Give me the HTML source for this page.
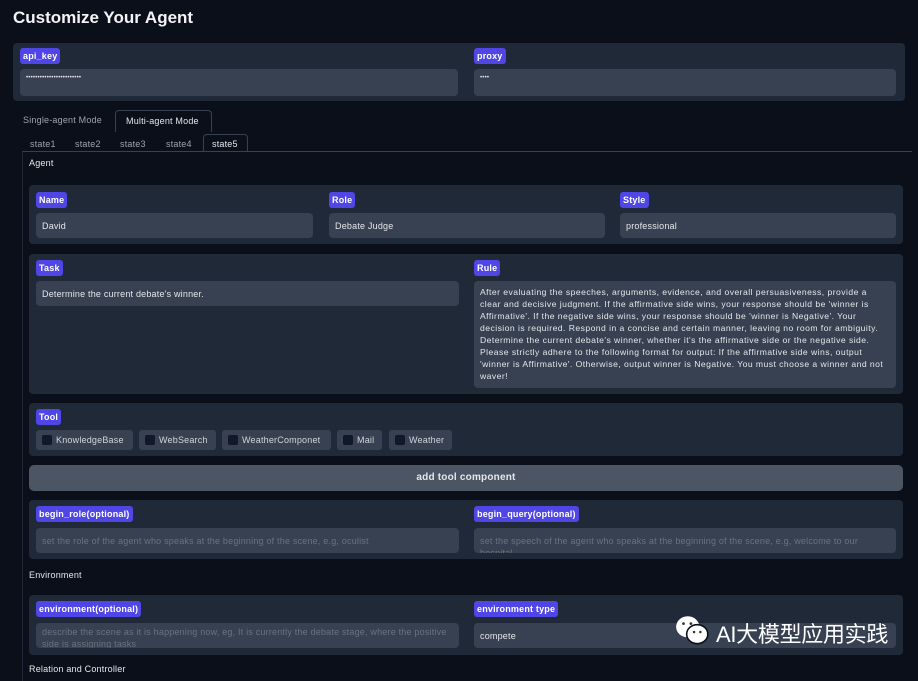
<!DOCTYPE html>
<html><head><meta charset="utf-8"><style>
*{box-sizing:border-box;margin:0;padding:0}
body{width:918px;height:672px;overflow:hidden;background:#0b0f19;font-family:"Liberation Sans",sans-serif;color:#d1d5db;position:relative;font-size:9px;letter-spacing:0.2px}
.a{position:absolute}
.p{position:absolute;background:#1f2937;border-radius:4px}
.b{position:absolute;background:#4f46e5;color:#fff;font-size:9px;font-weight:bold;padding:0 3px;height:16px;line-height:16px;border-radius:3px}
.i{position:absolute;background:#374151;border-radius:4px;font-size:9px;color:#e5e7eb;padding:7px 6px;line-height:12px}
.ph{color:#6b7280}
.cb{position:absolute;top:430px;height:20px;background:#374151;border-radius:3px;font-size:9px;line-height:20px;padding-left:20px;color:#d1d5db}
.cb:before{content:"";position:absolute;left:6px;top:5px;width:10px;height:10px;border-radius:2px;background:#111827}
</style></head><body>
<div class="a" style="left:13px;top:8px;font-size:17px;font-weight:bold;color:#f3f4f6;letter-spacing:0">Customize Your Agent</div>
<div class="p" style="left:13px;top:43px;width:892px;height:58px"></div>
<div class="b" style="left:20px;top:48px">api_key</div>
<div class="i" style="left:20px;top:69px;width:438px;height:27px;padding-top:3px;font-size:6px">••••••••••••••••••••••••</div>
<div class="b" style="left:474px;top:48px">proxy</div>
<div class="i" style="left:474px;top:69px;width:422px;height:27px;padding-top:3px;font-size:6px">••••</div>
<div class="a" style="left:23px;top:115px;color:#9ca3af">Single-agent Mode</div>
<div class="a" style="left:115px;top:110px;width:97px;height:22px;border:1px solid #374151;border-bottom:none;border-radius:4px 4px 0 0;padding:5px 10px;color:#e5e7eb">Multi-agent Mode</div>
<div class="a" style="left:30px;top:139px;color:#9ca3af">state1</div>
<div class="a" style="left:75px;top:139px;color:#9ca3af">state2</div>
<div class="a" style="left:120px;top:139px;color:#9ca3af">state3</div>
<div class="a" style="left:166px;top:139px;color:#9ca3af">state4</div>
<div class="a" style="left:203px;top:134px;width:45px;height:18px;border:1px solid #374151;border-bottom:none;border-radius:4px 4px 0 0;padding:4px 8px;color:#e5e7eb;background:#0b0f19">state5</div>
<div class="a" style="left:22px;top:151px;width:890px;height:530px;border-left:1px solid #1f2937;border-top:1px solid #374151"></div>
<div class="a" style="left:29px;top:158px;color:#e5e7eb">Agent</div>
<div class="p" style="left:29px;top:185px;width:874px;height:59px"></div>
<div class="b" style="left:36px;top:192px">Name</div>
<div class="i" style="left:36px;top:213px;width:277px;height:25px">David</div>
<div class="b" style="left:329px;top:192px">Role</div>
<div class="i" style="left:329px;top:213px;width:276px;height:25px">Debate Judge</div>
<div class="b" style="left:620px;top:192px">Style</div>
<div class="i" style="left:620px;top:213px;width:276px;height:25px">professional</div>
<div class="p" style="left:29px;top:254px;width:874px;height:140px"></div>
<div class="b" style="left:36px;top:260px">Task</div>
<div class="i" style="left:36px;top:281px;width:423px;height:25px">Determine the current debate's winner.</div>
<div class="b" style="left:474px;top:260px">Rule</div>
<div class="i" style="left:474px;top:281px;width:422px;height:107px;font-size:8.6px;letter-spacing:0.45px;padding:5px 6px">After evaluating the speeches, arguments, evidence, and overall persuasiveness, provide a clear and decisive judgment. If the affirmative side wins, your response should be 'winner is Affirmative'. If the negative side wins, your response should be 'winner is Negative'. Your decision is required. Respond in a concise and certain manner, leaving no room for ambiguity. Determine the current debate's winner, whether it's the affirmative side or the negative side. Please strictly adhere to the following format for output: If the affirmative side wins, output 'winner is Affirmative'. Otherwise, output winner is Negative. You must choose a winner and not waver!</div>
<div class="p" style="left:29px;top:403px;width:874px;height:53px"></div>
<div class="b" style="left:36px;top:409px">Tool</div>
<div class="cb" style="left:36px;width:97px">KnowledgeBase</div>
<div class="cb" style="left:139px;width:77px">WebSearch</div>
<div class="cb" style="left:222px;width:109px">WeatherComponet</div>
<div class="cb" style="left:337px;width:45px">Mail</div>
<div class="cb" style="left:389px;width:63px">Weather</div>
<div class="a" style="left:29px;top:465px;width:874px;height:26px;background:#4b5563;border-radius:5px;text-align:center;line-height:26px;font-size:10px;font-weight:bold;color:#e5e7eb">add tool component</div>
<div class="p" style="left:29px;top:500px;width:874px;height:59px"></div>
<div class="b" style="left:36px;top:506px">begin_role(optional)</div>
<div class="i ph" style="left:36px;top:528px;width:423px;height:25px">set the role of the agent who speaks at the beginning of the scene, e.g, oculist</div>
<div class="b" style="left:474px;top:506px">begin_query(optional)</div>
<div class="i ph" style="left:474px;top:528px;width:422px;height:25px;overflow:hidden">set the speech of the agent who speaks at the beginning of the scene, e.g, welcome to our hospital</div>
<div class="a" style="left:29px;top:570px;color:#e5e7eb">Environment</div>
<div class="p" style="left:29px;top:595px;width:874px;height:60px"></div>
<div class="b" style="left:36px;top:601px">environment(optional)</div>
<div class="i ph" style="left:36px;top:623px;width:423px;height:25px;overflow:hidden;padding-top:3px">describe the scene as it is happening now, eg, It is currently the debate stage, where the positive side is assigning tasks</div>
<div class="b" style="left:474px;top:601px">environment type</div>
<div class="i" style="left:474px;top:623px;width:422px;height:25px">compete</div>
<div class="a" style="left:29px;top:664px;color:#e5e7eb">Relation and Controller</div>
<svg class="a" style="left:674px;top:614px" width="38" height="34" viewBox="0 0 36 32"><ellipse cx="13" cy="12" rx="11" ry="10" fill="#fff"/><ellipse cx="22" cy="19" rx="10" ry="9" fill="#fff" stroke="#0b0f19" stroke-width="1.5"/><circle cx="9" cy="9" r="1.3" fill="#333"/><circle cx="16" cy="9" r="1.3" fill="#333"/><circle cx="19" cy="17" r="1.2" fill="#333"/><circle cx="25" cy="17" r="1.2" fill="#333"/></svg>
<div class="a" style="left:716px;top:617px;font-size:22px;color:#fff;letter-spacing:-0.3px;font-family:'Liberation Sans','Noto Sans CJK SC',sans-serif">AI大模型应用实践</div>
</body></html>
